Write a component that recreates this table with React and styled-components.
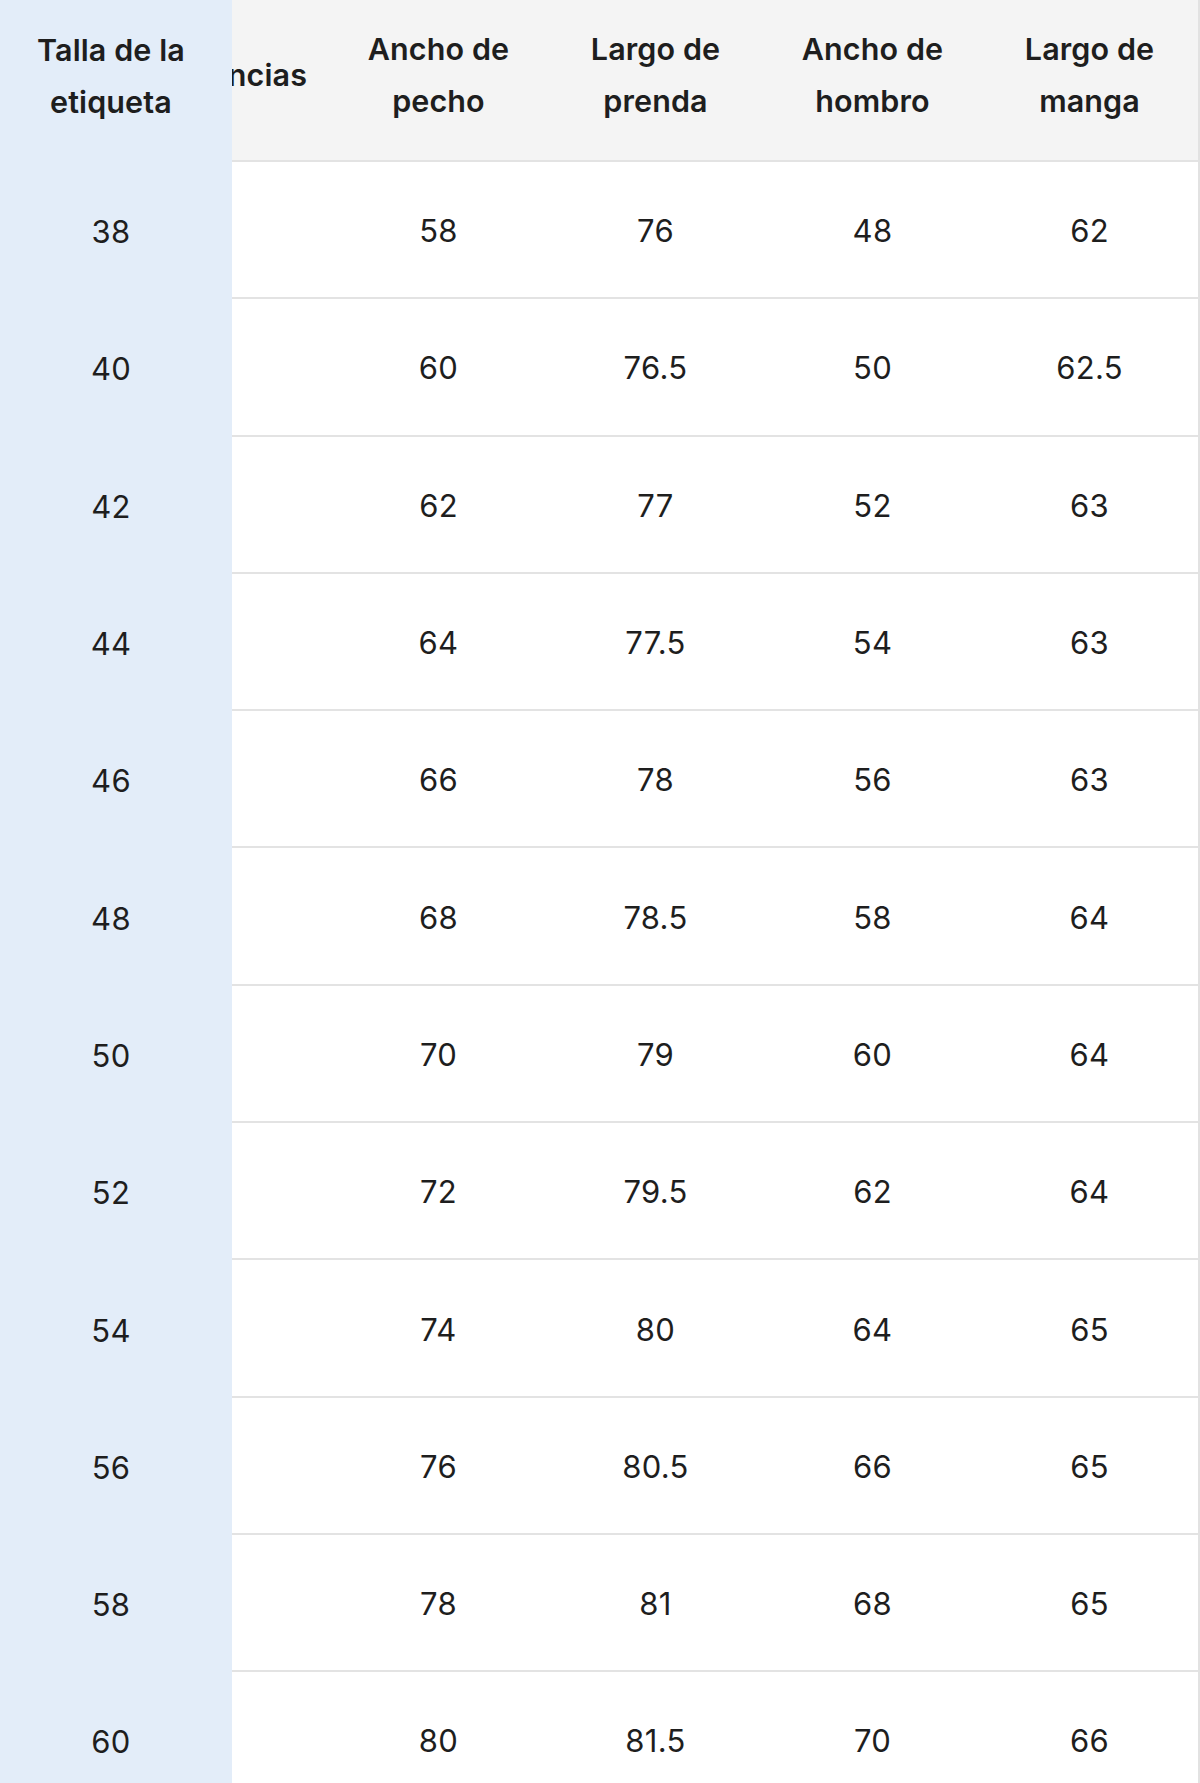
import React from "react";
import styled, { createGlobalStyle } from "styled-components";

const Global = createGlobalStyle`
  html, body { margin: 0; padding: 0; background: #ffffff; }
  body { font-family: "Inter", "Lato", "Liberation Sans", sans-serif; }
`;

const Table = styled.div`
  width: 1200px;
  box-sizing: border-box;
  border-right: 2px solid #e2e2e2;
  color: #1e1e1e;
`;

const Row = styled.div`
  display: grid;
  grid-template-columns: 232px 98px repeat(4, 217px);
  height: ${(p) => (p.$header ? "162px" : "137.3px")};
`;

const Cell = styled.div`
  box-sizing: border-box;
  display: flex;
  align-items: center;
  justify-content: center;
  text-align: center;
  background: ${(p) => (p.$header ? "#f4f4f4" : "#ffffff")};
  border-bottom: 2px solid #e3e3e3;
  font-size: ${(p) => (p.$header ? "30.5px" : "31px")};
  font-weight: ${(p) => (p.$header ? 600 : 400)};
  line-height: 52px;
  padding: ${(p) => (p.$header ? "0 14px 10px" : "3px 0 0")};
  letter-spacing: ${(p) => (p.$header ? "0.1px" : "0.3px")};
`;

const StickyCell = styled(Cell)`
  background: #e3edf9;
  border-bottom: none;
  padding-right: ${(p) => (p.$header ? "16px" : "10px")};
  padding-left: ${(p) => (p.$header ? "6px" : "0")};
`;

const ClippedCell = styled(Cell)`
  justify-content: flex-end;
  overflow: hidden;
  white-space: nowrap;
  padding: ${(p) => (p.$header ? "0 23px 10px 0" : "0")};
`;

const headers = [
  "Ancho de pecho",
  "Largo de prenda",
  "Ancho de hombro",
  "Largo de manga",
];

const rows = [
  ["38", "58", "76", "48", "62"],
  ["40", "60", "76.5", "50", "62.5"],
  ["42", "62", "77", "52", "63"],
  ["44", "64", "77.5", "54", "63"],
  ["46", "66", "78", "56", "63"],
  ["48", "68", "78.5", "58", "64"],
  ["50", "70", "79", "60", "64"],
  ["52", "72", "79.5", "62", "64"],
  ["54", "74", "80", "64", "65"],
  ["56", "76", "80.5", "66", "65"],
  ["58", "78", "81", "68", "65"],
  ["60", "80", "81.5", "70", "66"],
];

export default function App() {
  return (
    <>
      <Global />
      <Table>
        <Row $header>
          <StickyCell $header>Talla de la etiqueta</StickyCell>
          <ClippedCell $header>Equivalencias</ClippedCell>
          {headers.map((h) => (
            <Cell $header key={h}>
              {h}
            </Cell>
          ))}
        </Row>
        {rows.map(([size, ...vals]) => (
          <Row key={size}>
            <StickyCell>{size}</StickyCell>
            <ClippedCell />
            {vals.map((v, i) => (
              <Cell key={i}>{v}</Cell>
            ))}
          </Row>
        ))}
      </Table>
    </>
  );
}
